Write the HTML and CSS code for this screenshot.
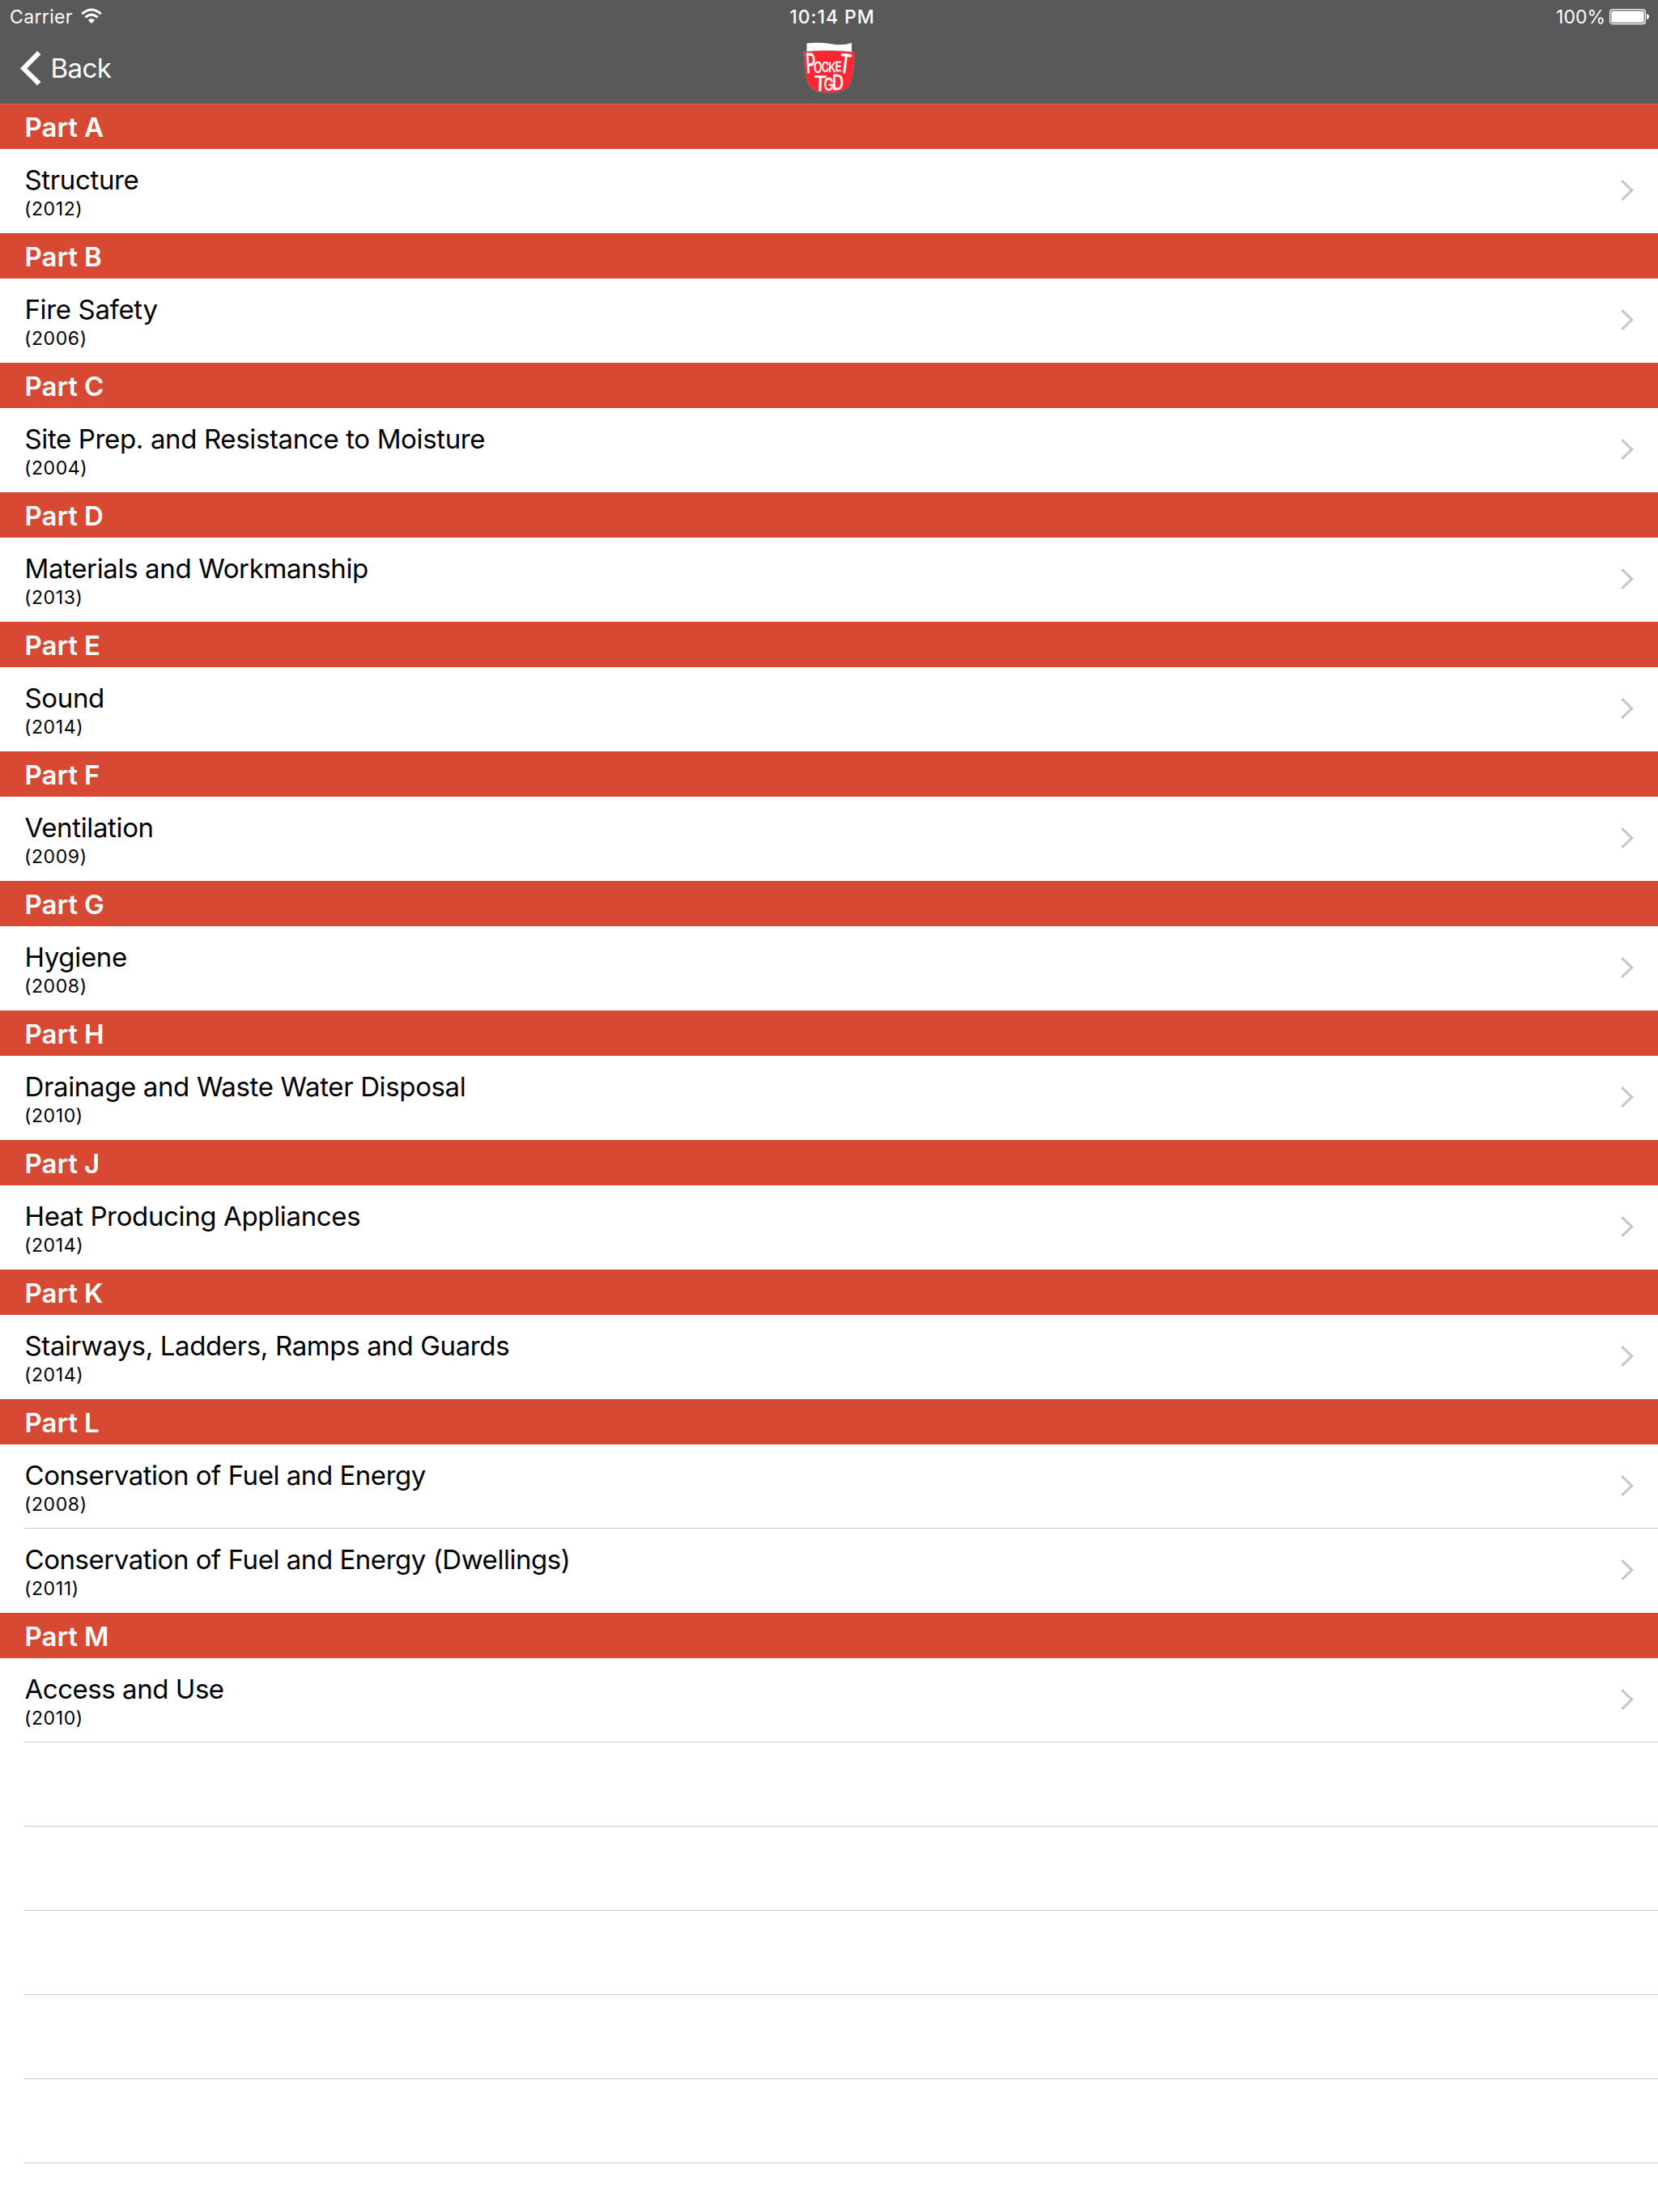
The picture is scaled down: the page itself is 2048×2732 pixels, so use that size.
FILE: index.html
```
<!DOCTYPE html>
<html lang="en">
<head>
<meta charset="utf-8">
<title>Pocket TGD</title>
<link rel="stylesheet" href="styles.css">
</head>
<body>
<svg class="defs" width="0" height="0" aria-hidden="true">
<symbol id="chevron" viewBox="0 0 16 26"><path d="M1.3 1.2 13.8 13 1.3 24.8" fill="none" stroke="#c7c7cc" stroke-width="3.2"/></symbol>
</svg>
<header class="top">
<div class="status">
<div class="side"><span class="carrier">Carrier</span>
<svg class="wifi" width="26" height="20" viewBox="0 0 26 20" fill="none" stroke="#fff" stroke-width="3"><path d="M1.2 7.2Q13-3.2 24.8 7.2"/><path d="M5.3 11.4Q13 4.9 20.7 11.4"/><path d="M8.8 14.7Q13 11.3 17.2 14.7L13 19Z" fill="#fff" stroke="none"/></svg></div>
<span class="time">10:14 PM</span>
<div class="side right"><span class="percent">100%</span>
<svg class="battery" width="50" height="20" viewBox="0 0 50 20"><rect x=".7" y=".7" width="43.6" height="17.8" rx="3" fill="none" stroke="#fff" stroke-width="1.3"/><rect x="2.4" y="2.4" width="40.2" height="14.4" rx="1.5" fill="#fff"/><path d="M46 6q3 .6 3 3.500t-3 3.500z" fill="#fff"/></svg></div>
</div>
<nav class="nav">
<a class="back"><svg width="26" height="43" viewBox="0 0 26 43"><path d="M21 0 25.400 4.200 8.300 21.400 25.400 38 21 42.500 0 21.400Z" fill="#fff"/></svg><span>Back</span></a>
<svg class="logo" width="90" height="90" viewBox="0 0 90 90">
<path d="M16.5 13.5Q32 11.5 46 14.2T72 13V25H16.5Z" fill="#fff"/>
<path d="M12.7 24.3Q42 20.5 75.3 24.6Q75.5 38 73.5 50Q71.5 68 60 72Q46 76.5 31 73Q17 70 15.5 52Q13 38 12.7 24.3Z" fill="#ff2633" stroke="#8b8585" stroke-width="1.2" stroke-dasharray="1.5 2"/>
<g class="letters">
<text transform="translate(16.3 50.5) rotate(-4) scale(.56 1)" font-size="34">P</text>
<text transform="translate(25 50.3) scale(.76 1)" font-size="18">O</text>
<text transform="translate(34.7 49) scale(.74 1)" font-size="17">C</text>
<text transform="translate(43.300 48.800) scale(.82 1)" font-size="16">K</text>
<text transform="translate(51.600 48) scale(.85 1)" font-size="16">E</text>
<text transform="translate(55.600 49.500) rotate(7) scale(.68 1)" font-size="33">T</text>
<text transform="translate(24.700 72) rotate(2) scale(.95 1)" font-size="26">T</text>
<text transform="translate(37.500 72.200) scale(.78 1)" font-size="21">G</text>
<text transform="translate(47.800 71) scale(.8 1)" font-size="25">D</text>
</g>
</svg>
</nav>
</header>
<main class="list">
<h2>Part A</h2>
<div class="row"><div><p class="title">Structure</p><p class="year">(2012)</p></div><svg class="chev"><use href="#chevron"/></svg></div>
<h2>Part B</h2>
<div class="row"><div><p class="title">Fire Safety</p><p class="year">(2006)</p></div><svg class="chev"><use href="#chevron"/></svg></div>
<h2>Part C</h2>
<div class="row"><div><p class="title">Site Prep. and Resistance to Moisture</p><p class="year">(2004)</p></div><svg class="chev"><use href="#chevron"/></svg></div>
<h2>Part D</h2>
<div class="row"><div><p class="title">Materials and Workmanship</p><p class="year">(2013)</p></div><svg class="chev"><use href="#chevron"/></svg></div>
<h2>Part E</h2>
<div class="row"><div><p class="title">Sound</p><p class="year">(2014)</p></div><svg class="chev"><use href="#chevron"/></svg></div>
<h2>Part F</h2>
<div class="row"><div><p class="title">Ventilation</p><p class="year">(2009)</p></div><svg class="chev"><use href="#chevron"/></svg></div>
<h2>Part G</h2>
<div class="row"><div><p class="title">Hygiene</p><p class="year">(2008)</p></div><svg class="chev"><use href="#chevron"/></svg></div>
<h2>Part H</h2>
<div class="row"><div><p class="title">Drainage and Waste Water Disposal</p><p class="year">(2010)</p></div><svg class="chev"><use href="#chevron"/></svg></div>
<h2>Part J</h2>
<div class="row"><div><p class="title">Heat Producing Appliances</p><p class="year">(2014)</p></div><svg class="chev"><use href="#chevron"/></svg></div>
<h2>Part K</h2>
<div class="row"><div><p class="title">Stairways, Ladders, Ramps and Guards</p><p class="year">(2014)</p></div><svg class="chev"><use href="#chevron"/></svg></div>
<h2>Part L</h2>
<div class="row line"><div><p class="title tight">Conservation of Fuel and Energy</p><p class="year">(2008)</p></div><svg class="chev"><use href="#chevron"/></svg></div>
<div class="row"><div><p class="title tight">Conservation of Fuel and Energy (Dwellings)</p><p class="year">(2011)</p></div><svg class="chev"><use href="#chevron"/></svg></div>
<h2>Part M</h2>
<div class="row line"><div><p class="title tight">Access and Use</p><p class="year">(2010)</p></div><svg class="chev"><use href="#chevron"/></svg></div>
<div class="row line"></div>
<div class="row line"></div>
<div class="row line"></div>
<div class="row line"></div>
<div class="row line"></div>
</main>
</body>
</html>
```
FILE: styles.css
```
* { box-sizing: border-box; margin: 0; padding: 0; }
body {
  width: 2048px;
  height: 2732px;
  overflow: hidden;
  background: #fff;
  color: #000;
  font-family: Inter, "Liberation Sans", sans-serif;
}
svg { display: block; flex: none; }
.defs { position: absolute; }
.top {
  height: 128px;
  background: #595959;
  color: #fff;
}
.status {
  display: grid;
  grid-template-columns: 1fr auto 1fr;
  height: 40px;
  padding: 0 10px 0 12px;
  font-size: 23px;
  line-height: 42px;
}
.side { display: flex; align-items: flex-start; }
.right { justify-content: flex-end; }
.carrier { letter-spacing: 0.35px; }
.time { padding-left: 6px; font-weight: 500; letter-spacing: 0.95px; }
.wifi { margin: 10px 0 0 10px; }
.battery { margin: 11px 0 0 5px; }
.nav {
  display: grid;
  grid-template-columns: 1fr 90px 1fr;
  height: 88px;
}
.back {
  display: flex;
  align-items: flex-start;
  padding: 23px 0 0 25px;
  font-size: 33px;
  line-height: 42px;
  letter-spacing: -0.6px;
}
.back span { margin-left: 11.5px; }
.logo { margin-left: 1px; }
.letters {
  fill: #fff;
  stroke: #fff;
  stroke-width: 0.3px;
  stroke-linejoin: round;
  font-weight: 500;
  letter-spacing: 0;
}
h2 {
  height: 56px;
  padding: 1px 0 0 30.5px;
  background: #d74932;
  color: #fff;
  font-size: 33px;
  font-weight: 600;
  line-height: 56px;
}
h2:first-child { border-top: 1px solid #e0644f; padding-top: 0; }
.row {
  display: flex;
  justify-content: space-between;
  height: 104px;
  margin-left: 30px;
  padding: 18px 30px 0 0;
}
.line { border-bottom: 1px solid #c8c7cc; }
.title {
  height: 40px;
  padding-left: 0.5px;
  font-size: 33px;
  line-height: 40px;
  letter-spacing: -0.36px;
  white-space: nowrap;
}
.tight { letter-spacing: -0.46px; }
.year { font-size: 23px; line-height: 33px; letter-spacing: 0.6px; }
.chev { width: 16px; height: 26px; margin-top: 20px; }
```
